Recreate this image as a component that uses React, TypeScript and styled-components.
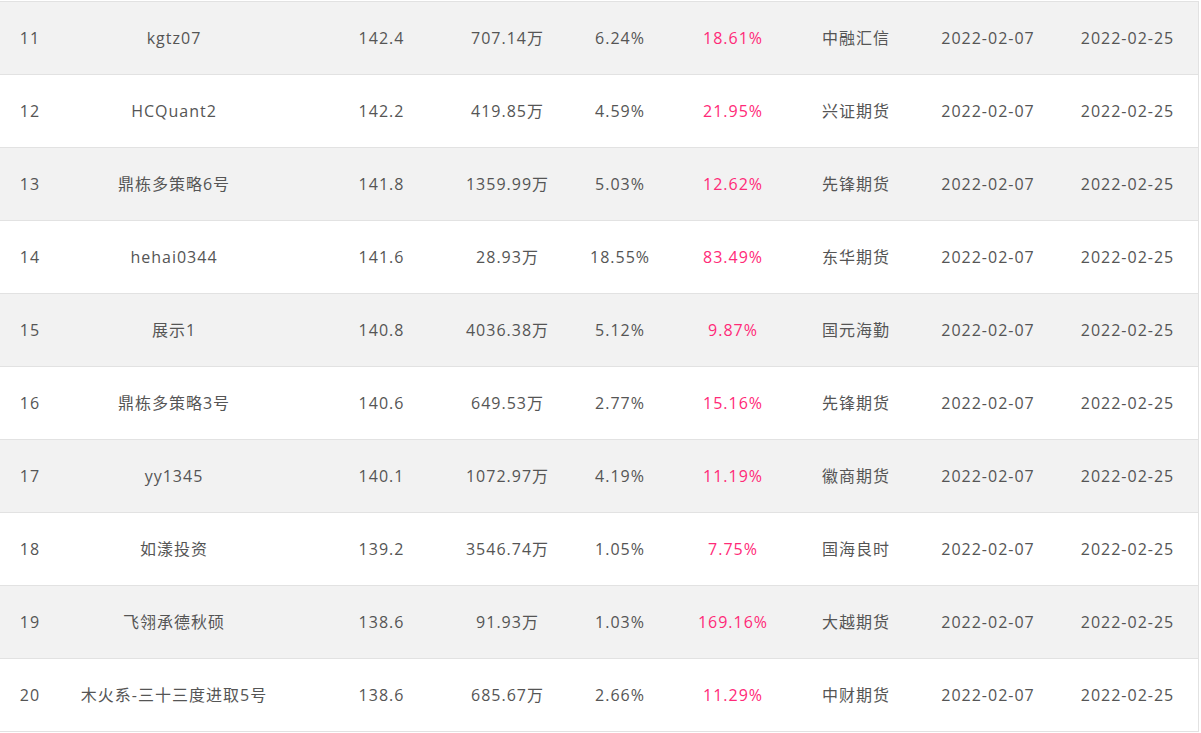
import React from "react";
import styled, { createGlobalStyle } from "styled-components";

const GlobalStyle = createGlobalStyle`
  html, body { margin: 0; padding: 0; background: #ffffff; }
  body {
    font-family: "Open Sans", "Noto Sans CJK SC", sans-serif;
    color: #555555;
  }
`;

type Col = { width: number; shift: number };

const COLS: Col[] = [
  { width: 102, shift: -21 },
  { width: 176, shift: -16 },
  { width: 167, shift: 20 },
  { width: 119, shift: 3 },
  { width: 112, shift: 0 },
  { width: 118, shift: -2 },
  { width: 128, shift: -2 },
  { width: 136, shift: -2 },
  { width: 141, shift: -1 },
];

const Page = styled.div`
  padding-top: 1px;
  width: 1200px;
`;

const Table = styled.div`
  width: 1199px;
  border-top: 1px solid #e2e2e2;
  border-right: 1px solid #e2e2e2;
  box-sizing: border-box;
`;

const Row = styled.div<{ $striped: boolean }>`
  display: grid;
  grid-template-columns: ${COLS.map((c) => `${c.width}px`).join(" ")};
  height: 73px;
  box-sizing: border-box;
  border-bottom: 1px solid #e2e2e2;
  background: ${(p) => (p.$striped ? "#f2f2f2" : "#ffffff")};
`;

const Cell = styled.div<{ $shift: number; $pink?: boolean }>`
  display: flex;
  align-items: center;
  justify-content: center;
  white-space: nowrap;
  font-size: 16px;
  line-height: 22px;
  letter-spacing: 1px;
  color: ${(p) => (p.$pink ? "#ff2a78" : "#555555")};
  padding-left: ${(p) => (p.$shift > 0 ? p.$shift * 2 : 0)}px;
  padding-right: ${(p) => (p.$shift < 0 ? -p.$shift * 2 : 0)}px;
`;

const rows: string[][] = [
  ["11", "kgtz07", "142.4", "707.14万", "6.24%", "18.61%", "中融汇信", "2022-02-07", "2022-02-25"],
  ["12", "HCQuant2", "142.2", "419.85万", "4.59%", "21.95%", "兴证期货", "2022-02-07", "2022-02-25"],
  ["13", "鼎栋多策略6号", "141.8", "1359.99万", "5.03%", "12.62%", "先锋期货", "2022-02-07", "2022-02-25"],
  ["14", "hehai0344", "141.6", "28.93万", "18.55%", "83.49%", "东华期货", "2022-02-07", "2022-02-25"],
  ["15", "展示1", "140.8", "4036.38万", "5.12%", "9.87%", "国元海勤", "2022-02-07", "2022-02-25"],
  ["16", "鼎栋多策略3号", "140.6", "649.53万", "2.77%", "15.16%", "先锋期货", "2022-02-07", "2022-02-25"],
  ["17", "yy1345", "140.1", "1072.97万", "4.19%", "11.19%", "徽商期货", "2022-02-07", "2022-02-25"],
  ["18", "如漾投资", "139.2", "3546.74万", "1.05%", "7.75%", "国海良时", "2022-02-07", "2022-02-25"],
  ["19", "飞翎承德秋硕", "138.6", "91.93万", "1.03%", "169.16%", "大越期货", "2022-02-07", "2022-02-25"],
  ["20", "木火系-三十三度进取5号", "138.6", "685.67万", "2.66%", "11.29%", "中财期货", "2022-02-07", "2022-02-25"],
];

export default function App() {
  return (
    <Page>
      <GlobalStyle />
      <Table>
        {rows.map((r, i) => (
          <Row key={r[0]} $striped={i % 2 === 0}>
            {r.map((v, j) => (
              <Cell key={j} $shift={COLS[j].shift} $pink={j === 5}>
                {v}
              </Cell>
            ))}
          </Row>
        ))}
      </Table>
    </Page>
  );
}
